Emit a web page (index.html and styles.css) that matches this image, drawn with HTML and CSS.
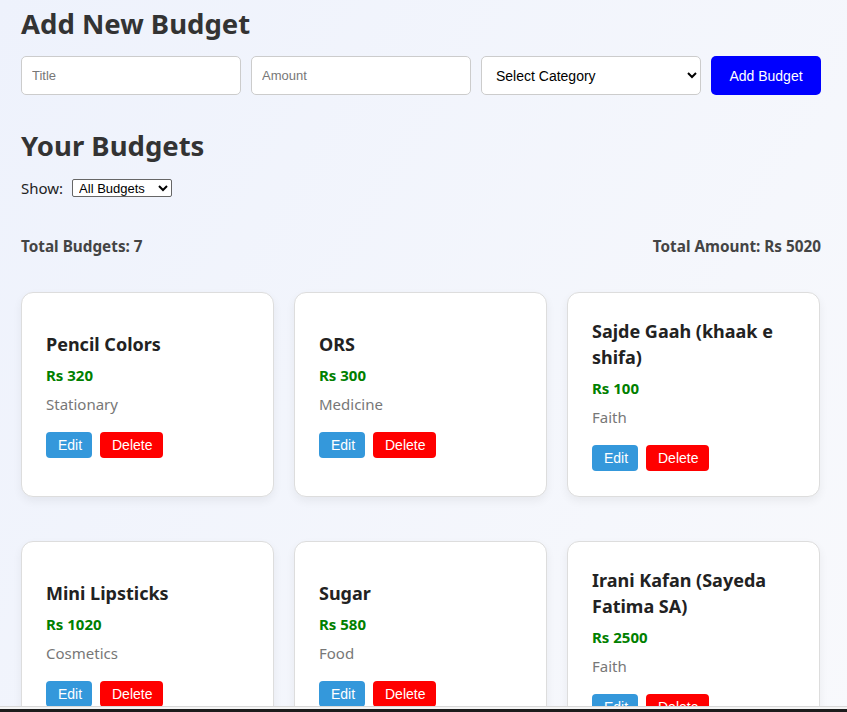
FILE: index.html
```html
<!DOCTYPE html>
<html lang="en">
<head>
<meta charset="utf-8">
<title>Budgets</title>
<link rel="stylesheet" href="styles.css">
</head>
<body>
<div class="page">
  <h1 class="heading">Add New Budget</h1>
  <form class="add-form">
    <input class="field" type="text" placeholder="Title">
    <input class="field" type="text" placeholder="Amount">
    <select class="field select">
      <option>Select Category</option>
    </select>
    <button type="button" class="add-btn">Add Budget</button>
  </form>

  <h1 class="heading second">Your Budgets</h1>
  <div class="filter">
    <label>Show:</label>
    <select class="filter-select"><option>All Budgets</option></select>
  </div>

  <div class="totals">
    <span>Total Budgets: 7</span>
    <span>Total Amount: Rs 5020</span>
  </div>

  <div class="grid">
    <div class="card">
      <h3 class="title">Pencil Colors</h3>
      <p class="amount">Rs 320</p>
      <p class="cat">Stationary</p>
      <div class="actions"><button class="edit">Edit</button><button class="del">Delete</button></div>
    </div>
    <div class="card">
      <h3 class="title">ORS</h3>
      <p class="amount">Rs 300</p>
      <p class="cat">Medicine</p>
      <div class="actions"><button class="edit">Edit</button><button class="del">Delete</button></div>
    </div>
    <div class="card">
      <h3 class="title">Sajde Gaah (khaak e shifa)</h3>
      <p class="amount">Rs 100</p>
      <p class="cat">Faith</p>
      <div class="actions"><button class="edit">Edit</button><button class="del">Delete</button></div>
    </div>
    <div class="card">
      <h3 class="title">Mini Lipsticks</h3>
      <p class="amount">Rs 1020</p>
      <p class="cat">Cosmetics</p>
      <div class="actions"><button class="edit">Edit</button><button class="del">Delete</button></div>
    </div>
    <div class="card">
      <h3 class="title">Sugar</h3>
      <p class="amount">Rs 580</p>
      <p class="cat">Food</p>
      <div class="actions"><button class="edit">Edit</button><button class="del">Delete</button></div>
    </div>
    <div class="card">
      <h3 class="title">Irani Kafan (Sayeda Fatima SA)</h3>
      <p class="amount">Rs 2500</p>
      <p class="cat">Faith</p>
      <div class="actions"><button class="edit">Edit</button><button class="del">Delete</button></div>
    </div>
  </div>
</div>
<div class="taskbar"></div>
</body>
</html>
```
FILE: styles.css
```css
html, body {
  margin: 0;
  padding: 0;
}
body {
  background: linear-gradient(120deg, #eef2fc 0%, #f8f9fc 100%);
  min-height: 100vh;
  font-family: "Noto Sans", "Open Sans", sans-serif;
  color: #333;
  overflow: hidden;
}
.page {
  padding: 0 26px 0 21px;
}
.heading {
  margin: 0;
  padding-top: 6px;
  font-size: 27.5px;
  line-height: 36px;
  font-weight: 700;
  color: #333;
}
.heading.second {
  padding-top: 0;
  margin-top: 33px;
}
.add-form {
  display: flex;
  gap: 10px;
  margin-top: 14px;
}
.field {
  box-sizing: border-box;
  width: 220px;
  height: 39px;
  border: 1px solid #ccc;
  border-radius: 5px;
  background: #fff;
  padding: 0 10px;
  font-family: "Liberation Sans", Arial, sans-serif;
  font-size: 13px;
  color: #111;
}
.field::placeholder {
  color: #777;
}
.select {
  padding-left: 10px;
  font-size: 14px;
  color: #000;
}
.add-btn {
  box-sizing: border-box;
  width: 110px;
  height: 39px;
  border: none;
  border-radius: 5px;
  background: #0000ff;
  color: #fff;
  font-family: "Liberation Sans", Arial, sans-serif;
  font-size: 14px;
}
.filter {
  display: flex;
  align-items: center;
  gap: 9px;
  margin-top: 14px;
  font-size: 15px;
  color: #222;
}
.filter-select {
  width: 100px;
  height: 18px;
  font-family: "Liberation Sans", Arial, sans-serif;
  font-size: 13px;
  border: 1px solid #666;
  border-radius: 2px;
  background: #fff;
  color: #000;
  padding: 0 2px;
}
.totals {
  display: flex;
  justify-content: space-between;
  margin-top: 38px;
  font-size: 15.3px;
  font-weight: 700;
  color: #444;
}
.grid {
  display: grid;
  grid-template-columns: repeat(3, 253px);
  column-gap: 20px;
  row-gap: 44px;
  margin-top: 36px;
}
.card {
  box-sizing: border-box;
  min-height: 205px;
  background: #fff;
  border: 1px solid #ddd;
  border-radius: 12px;
  box-shadow: 0 4px 10px rgba(0, 0, 0, 0.06);
  padding: 24px 24px;
  display: flex;
  flex-direction: column;
  justify-content: center;
}
.title {
  margin: 0;
  font-size: 18px;
  line-height: 26px;
  font-weight: 700;
  color: #222;
}
.amount {
  margin: 8px 0 0;
  font-size: 15px;
  line-height: 20px;
  font-weight: 700;
  color: #008000;
}
.cat {
  margin: 9px 0 0;
  font-size: 15px;
  line-height: 20px;
  color: #777;
}
.actions {
  display: flex;
  gap: 8px;
  margin-top: 18px;
}
.actions button {
  height: 26px;
  border: none;
  border-radius: 4px;
  color: #fff;
  font-family: "Liberation Sans", Arial, sans-serif;
  font-size: 14px;
  padding: 0 12px;
}
.edit {
  width: 46px;
  background: #3498db;
}
.del {
  width: 63px;
  background: #ff0000;
}
.taskbar {
  position: fixed;
  left: 0;
  right: 0;
  bottom: 0;
  height: 5px;
  border-top: 1px solid #d8d8d8;
  background: linear-gradient(#f4f4f4 0 2px, #1c1c1c 2px);
}
```
